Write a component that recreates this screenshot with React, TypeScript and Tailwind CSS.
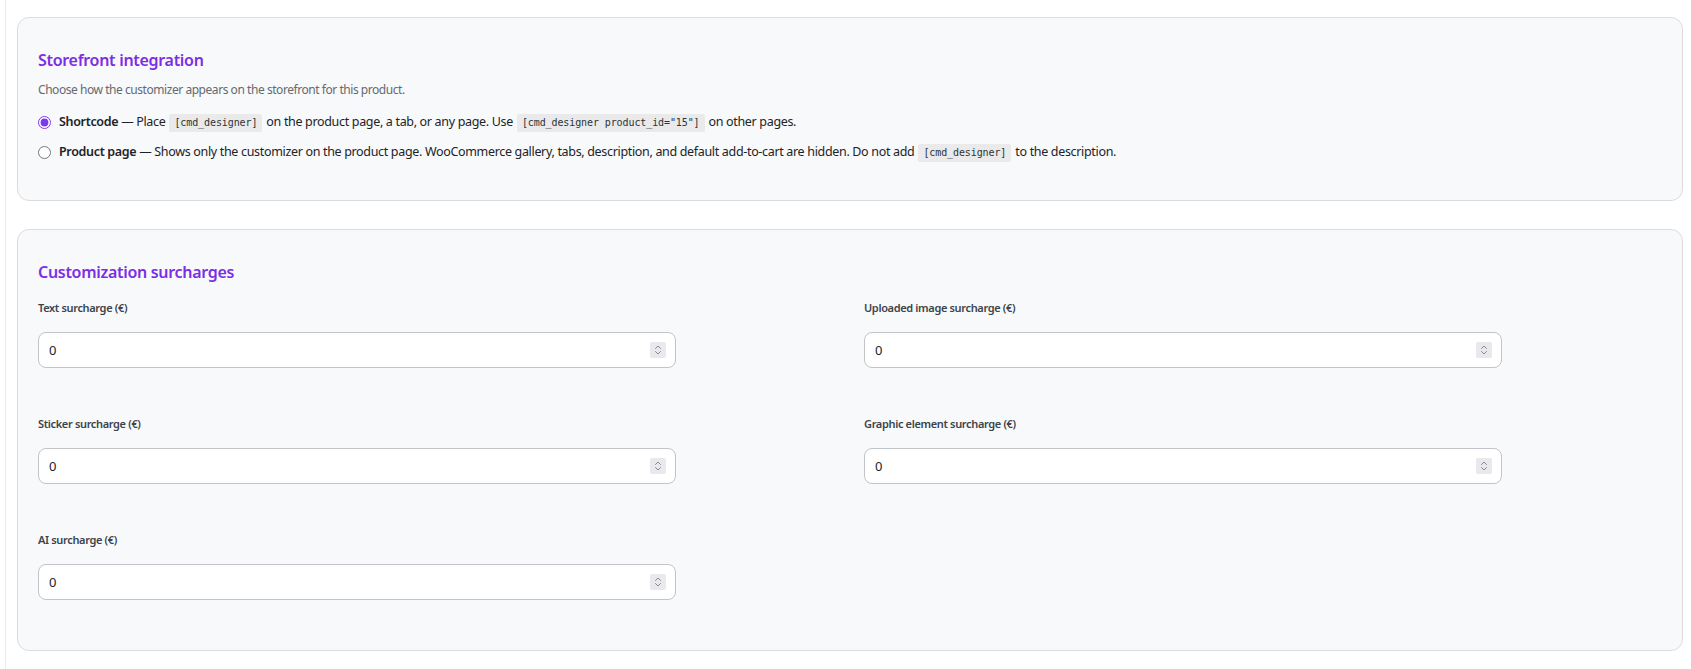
import React, { useState } from 'react';

const Code: React.FC<{ children: React.ReactNode }> = ({ children }) => (
  <code className="mx-[4px] inline-block rounded-[2px] bg-[#eaeaeb] px-[5px] py-[2px] font-['DejaVu_Sans_Mono',monospace] text-[10px] leading-[13.5px] tracking-[-0.1px] text-[#2c3338]">
    {children}
  </code>
);

const Spinner: React.FC = () => (
  <div className="pointer-events-none absolute right-[10px] top-1/2 flex h-4 w-4 -translate-y-1/2 items-center justify-center rounded-[2px] bg-[#e9e9ed]">
    <svg width="8" height="12" viewBox="0 0 8 12" fill="none" stroke="#8a8a92" strokeWidth="1" strokeLinecap="round" strokeLinejoin="round">
      <path d="M1.5 4.5 L4 2 L6.5 4.5" />
      <path d="M1.5 7.5 L4 10 L6.5 7.5" />
    </svg>
  </div>
);

const SurchargeField: React.FC<{ label: string }> = ({ label }) => (
  <div className="flex flex-col">
    <label className="mb-4 text-[11px] font-semibold leading-4 tracking-[-0.35px] text-[#3c434a]">{label}</label>
    <div className="relative w-4/5">
      <input
        type="text"
        defaultValue="0"
        className="h-9 w-full rounded-lg border border-[#c3c4c7] bg-white px-[10px] text-[13px] text-[#1d2327] outline-none"
      />
      <Spinner />
    </div>
  </div>
);

const App: React.FC = () => {
  const [mode, setMode] = useState('shortcode');

  const fields = [
    'Text surcharge (€)',
    'Uploaded image surcharge (€)',
    'Sticker surcharge (€)',
    'Graphic element surcharge (€)',
    'AI surcharge (€)',
  ];

  return (
    <div className="min-h-screen bg-white pl-[5px] font-['Noto_Sans',sans-serif]">
      <div className="min-h-screen border-l border-[#ececec] pb-6 pl-[11px] pr-[8px] pt-[17px]">
        {/* Storefront integration */}
        <div className="rounded-xl border border-[#dcdcde] bg-[#f8f9fa] px-[20px] pb-[38px] pt-[30px]">
          <h2 className="mb-[8px] text-base font-semibold leading-6 tracking-[-0.3px] text-[#7c2ee6]">Storefront integration</h2>
          <p className="mb-[12px] text-[12px] leading-5 tracking-[-0.45px] text-[#646970]">
            Choose how the customizer appears on the storefront for this product.
          </p>
          <div className="flex flex-col gap-[10px] text-[12.5px] leading-5 tracking-[-0.33px] text-[#1d2327]">
            <label className="flex items-center">
              <input
                type="radio"
                name="mode"
                checked={mode === 'shortcode'}
                onChange={() => setMode('shortcode')}
                className="m-0 mr-[8px] h-[13px] w-[13px] accent-[#7c3aed]"
              />
              <span>
                <strong className="font-semibold">Shortcode</strong> — Place<Code>[cmd_designer]</Code>on the product page, a tab, or any page. Use<Code>[cmd_designer product_id="15"]</Code>on other pages.
              </span>
            </label>
            <label className="flex items-center">
              <input
                type="radio"
                name="mode"
                checked={mode === 'product'}
                onChange={() => setMode('product')}
                className="m-0 mr-[8px] h-[13px] w-[13px] accent-[#7c3aed]"
              />
              <span>
                <strong className="font-semibold">Product page</strong> — Shows only the customizer on the product page. WooCommerce gallery, tabs, description, and default add-to-cart are hidden. Do not add<Code>[cmd_designer]</Code>to the description.
              </span>
            </label>
          </div>
        </div>

        {/* Customization surcharges */}
        <div className="mt-[28px] rounded-xl border border-[#dcdcde] bg-[#f8f9fa] px-[20px] pb-[50px] pt-[30px]">
          <h2 className="mb-[16px] text-base font-semibold leading-6 tracking-[-0.3px] text-[#7c2ee6]">Customization surcharges</h2>
          <div className="grid grid-cols-2 gap-x-[28px] gap-y-[48px]">
            {fields.map((f) => (
              <SurchargeField key={f} label={f} />
            ))}
          </div>
        </div>
      </div>
    </div>
  );
};

export default App;
